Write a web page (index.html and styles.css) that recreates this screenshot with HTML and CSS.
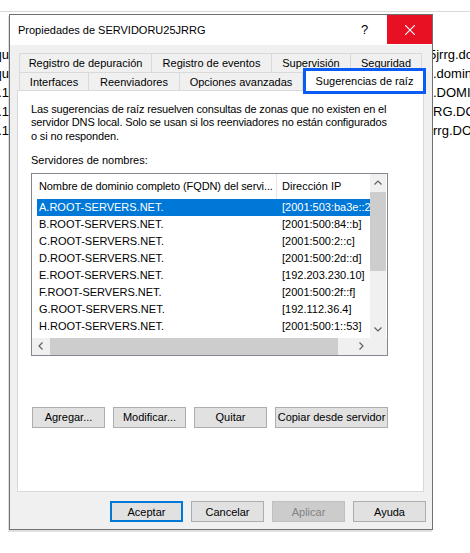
FILE: index.html
```html
<!DOCTYPE html>
<html>
  <head>
    <title>Propiedades de SERVIDORU25JRRG</title>
    <link rel="stylesheet" href="styles.css">
  </head>
  <body>
    <!-- ventana de fondo (parcialmente tapada por el diálogo) -->
    <div class="backdrop">
      <div class="backdrop-bar"></div>
      <div class="backdrop-rows">
        <div class="backdrop-row"><span class="backdrop-left"><span>Bloqu</span></span><span class="backdrop-right"><span class="shift">5jrrg.dominio</span></span></div>
        <div class="backdrop-row"><span class="backdrop-left"><span>Bloqu</span></span><span class="backdrop-right">.dominio</span></div>
        <div class="backdrop-row"><span class="backdrop-left"><span>192.168.1</span></span><span class="backdrop-right">.DOMINIO</span></div>
        <div class="backdrop-row"><span class="backdrop-left"><span>192.168.1</span></span><span class="backdrop-right">RG.DOMINIO</span></div>
        <div class="backdrop-row"><span class="backdrop-left"><span>192.168.1</span></span><span class="backdrop-right">rrg.DOMINIO</span></div>
      </div>
    </div>

    <div class="dialog">
      <div class="titlebar">
        <span class="title">Propiedades de SERVIDORU25JRRG</span>
        <span class="caption-btn help">?</span>
        <span class="caption-btn close">
          <svg width="10" height="10" viewBox="0 0 10 10">
            <path d="M0 0 L10 10 M10 0 L0 10" stroke="#fff" stroke-width="1.1" fill="none" />
          </svg>
        </span>
      </div>

      <div class="dialog-body">
        <div class="tab-row tab-row-back">
          <div class="tab">Registro de depuración</div>
          <div class="tab">Registro de eventos</div>
          <div class="tab">Supervisión</div>
          <div class="tab">Seguridad</div>
        </div>
        <div class="tab-row tab-row-front">
          <div class="tab">Interfaces</div>
          <div class="tab">Reenviadores</div>
          <div class="tab">Opciones avanzadas</div>
          <div class="tab tab-active">Sugerencias de raíz</div>
        </div>

        <div class="tab-panel">
          <p class="intro">Las sugerencias de raíz resuelven consultas de zonas que no existen en el<br>servidor DNS local. Solo se usan si los reenviadores no están configurados<br>o si no responden.</p>
          <p class="field-label">Servidores de nombres:</p>

          <div class="listbox">
            <div class="list-main">
              <div class="list-header">
                <span class="col-name">Nombre de dominio completo (FQDN) del servi...</span>
                <span class="col-ip">Dirección IP</span>
              </div>
              <div class="list-row selected"><span class="col-name">A.ROOT-SERVERS.NET.</span><span class="col-ip">[2001:503:ba3e::2:30]</span></div>
              <div class="list-row"><span class="col-name">B.ROOT-SERVERS.NET.</span><span class="col-ip">[2001:500:84::b]</span></div>
              <div class="list-row"><span class="col-name">C.ROOT-SERVERS.NET.</span><span class="col-ip">[2001:500:2::c]</span></div>
              <div class="list-row"><span class="col-name">D.ROOT-SERVERS.NET.</span><span class="col-ip">[2001:500:2d::d]</span></div>
              <div class="list-row"><span class="col-name">E.ROOT-SERVERS.NET.</span><span class="col-ip">[192.203.230.10]</span></div>
              <div class="list-row"><span class="col-name">F.ROOT-SERVERS.NET.</span><span class="col-ip">[2001:500:2f::f]</span></div>
              <div class="list-row"><span class="col-name">G.ROOT-SERVERS.NET.</span><span class="col-ip">[192.112.36.4]</span></div>
              <div class="list-row"><span class="col-name">H.ROOT-SERVERS.NET.</span><span class="col-ip">[2001:500:1::53]</span></div>
            </div>

            <div class="vscroll">
              <span class="sb-arrow">
                <svg width="8" height="5" viewBox="0 0 8 5"><polyline points="0.5,4.5 4,1 7.5,4.5" /></svg>
              </span>
              <span class="sb-thumb"></span>
              <span class="sb-fill"></span>
              <span class="sb-arrow">
                <svg width="8" height="5" viewBox="0 0 8 5"><polyline points="0.5,0.5 4,4 7.5,0.5" /></svg>
              </span>
            </div>

            <div class="hscroll">
              <span class="sb-arrow">
                <svg width="5" height="8" viewBox="0 0 5 8"><polyline points="4.5,0.5 1,4 4.5,7.5" /></svg>
              </span>
              <span class="sb-thumb"></span>
              <span class="sb-fill"></span>
              <span class="sb-arrow">
                <svg width="5" height="8" viewBox="0 0 5 8"><polyline points="0.5,0.5 4,4 0.5,7.5" /></svg>
              </span>
            </div>
            <div class="sb-corner"></div>
          </div>

          <div class="server-actions">
            <button class="btn">Agregar...</button>
            <button class="btn">Modificar...</button>
            <button class="btn">Quitar</button>
            <button class="btn btn-wide">Copiar desde servidor</button>
          </div>
        </div>

        <div class="dialog-actions">
          <button class="btn btn-default">Aceptar</button>
          <button class="btn">Cancelar</button>
          <button class="btn" disabled>Aplicar</button>
          <button class="btn">Ayuda</button>
        </div>
      </div>
    </div>
  </body>
</html>
```

FILE: styles.css
```css
/* reset */
* {
  box-sizing: border-box;
  margin: 0;
  padding: 0;
}

body {
  position: relative;
  width: 470px;
  height: 553px;
  overflow: hidden;
  background: #fff;
  color: #000;
  font-family: "Liberation Sans", Arial, sans-serif;
  font-size: 11px;
}

/* ventana de fondo */
.backdrop {
  padding-top: 11px;
}

.backdrop-bar {
  height: 1px;
  background: #d9d9d9;
}

.backdrop-rows {
  padding-top: 33px;
  font-size: 13px;
}

.backdrop-row {
  display: flex;
  align-items: center;
  height: 19px;
  white-space: nowrap;
}

.backdrop-left {
  display: flex;
  justify-content: flex-end;
  width: 9px;
  overflow: hidden;
}

.backdrop-right {
  flex: 1;
  margin-left: 424px;
  overflow: hidden;
}

.backdrop-right .shift {
  margin-left: -4px;
}

/* diálogo */
.dialog {
  position: absolute;
  left: 9px;
  top: 14px;
  width: 424px;
  height: 516px;
  display: flex;
  flex-direction: column;
  border: 1px solid #707070;
  background: #f0f0f0;
  box-shadow: -1px 2px 0 rgba(0, 0, 0, 0.12);
}

.titlebar {
  display: flex;
  align-items: flex-start;
  height: 30px;
  background: #fff;
}

.title {
  flex: 1;
  padding-left: 8px;
  font-size: 11px;
  line-height: 30px;
}

.caption-btn {
  display: flex;
  align-items: center;
  justify-content: center;
  width: 45px;
  height: 29px;
}

.help {
  font-size: 13px;
}

.close {
  background: #e81123;
}

.dialog-body {
  flex: 1;
  display: flex;
  flex-direction: column;
  padding: 8px 8px 0 7px;
}

/* pestañas */
.tab-row {
  display: grid;
  margin-left: 2px;
}

.tab-row-back {
  grid-template-columns: 133px 120px 79px 71px;
  grid-template-rows: 19px;
}

.tab-row-front {
  grid-template-columns: 70px 91px 123px 119px;
  grid-template-rows: 18px;
}

.tab {
  display: flex;
  align-items: center;
  justify-content: center;
  border: 1px solid #d9d9d9;
  border-bottom: none;
  border-left: none;
  background: #f0f0f0;
  white-space: nowrap;
}

.tab:first-child {
  border-left: 1px solid #d9d9d9;
}

.tab-active {
  position: relative;
  z-index: 1;
  height: 26px;
  margin-top: -4px;
  margin-right: -4px;
  border: 3px solid #0b5cf4;
  background: #fff;
}

.tab-panel {
  height: 402px;
  padding: 12px 13px 0;
  border: 1px solid #d9d9d9;
  background: #fff;
}

.intro {
  line-height: 13.3px;
  letter-spacing: -0.15px;
  white-space: nowrap;
}

.field-label {
  margin-top: 11px;
  line-height: 13px;
}

/* lista de servidores */
.listbox {
  display: grid;
  grid-template-columns: 1fr 17px;
  grid-template-rows: 1fr 17px;
  width: 357px;
  height: 183px;
  margin-top: 6px;
  border: 1px solid #828790;
  background: #fff;
}

.list-main {
  overflow: hidden;
  white-space: nowrap;
}

.list-header {
  display: grid;
  grid-template-columns: 245px auto;
  height: 25px;
  align-items: center;
}

.list-header .col-name {
  padding-left: 7px;
  line-height: 25px;
  letter-spacing: -0.1px;
  border-right: 1px solid #e5e5e5;
}

.list-header .col-ip {
  padding-left: 5px;
}

.list-row {
  display: grid;
  grid-template-columns: 240px auto;
  height: 17px;
  margin-left: 5px;
  line-height: 17px;
}

.list-row .col-name {
  padding-left: 2px;
}

.list-row .col-ip {
  padding-left: 5px;
}

.list-row.selected {
  background: #0078d7;
  color: #fff;
}

.vscroll,
.hscroll {
  display: flex;
  background: #f0f0f0;
}

.vscroll {
  flex-direction: column;
  border-right: 1px solid #fff;
}

.sb-arrow {
  display: flex;
  align-items: center;
  justify-content: center;
  flex: 0 0 17px;
}

.sb-arrow polyline {
  fill: none;
  stroke: #606060;
  stroke-width: 1.2;
}

.vscroll .sb-thumb {
  flex: 0 0 79px;
  margin-top: 1px;
  background: #cdcdcd;
}

.hscroll .sb-thumb {
  flex: 0 0 288px;
  margin-left: 1px;
  background: #cdcdcd;
}

.sb-fill {
  flex: 1;
}

.sb-corner {
  background: #f0f0f0;
}

/* botones */
.btn {
  width: 73px;
  height: 21px;
  border: 1px solid #adadad;
  background: #e1e1e1;
  color: #000;
  font: inherit;
  white-space: nowrap;
}

.btn-wide {
  width: 113px;
}

.btn-default {
  border: 2px solid #0078d7;
}

.btn:disabled {
  border-color: #bfbfbf;
  background: #cccccc;
  color: #838383;
}

.server-actions {
  display: flex;
  gap: 8px;
  margin: 51px 0 0 1px;
}

.dialog-actions {
  display: flex;
  justify-content: flex-end;
  gap: 8px;
  margin-right: -2px;
  padding-top: 9px;
}
```
